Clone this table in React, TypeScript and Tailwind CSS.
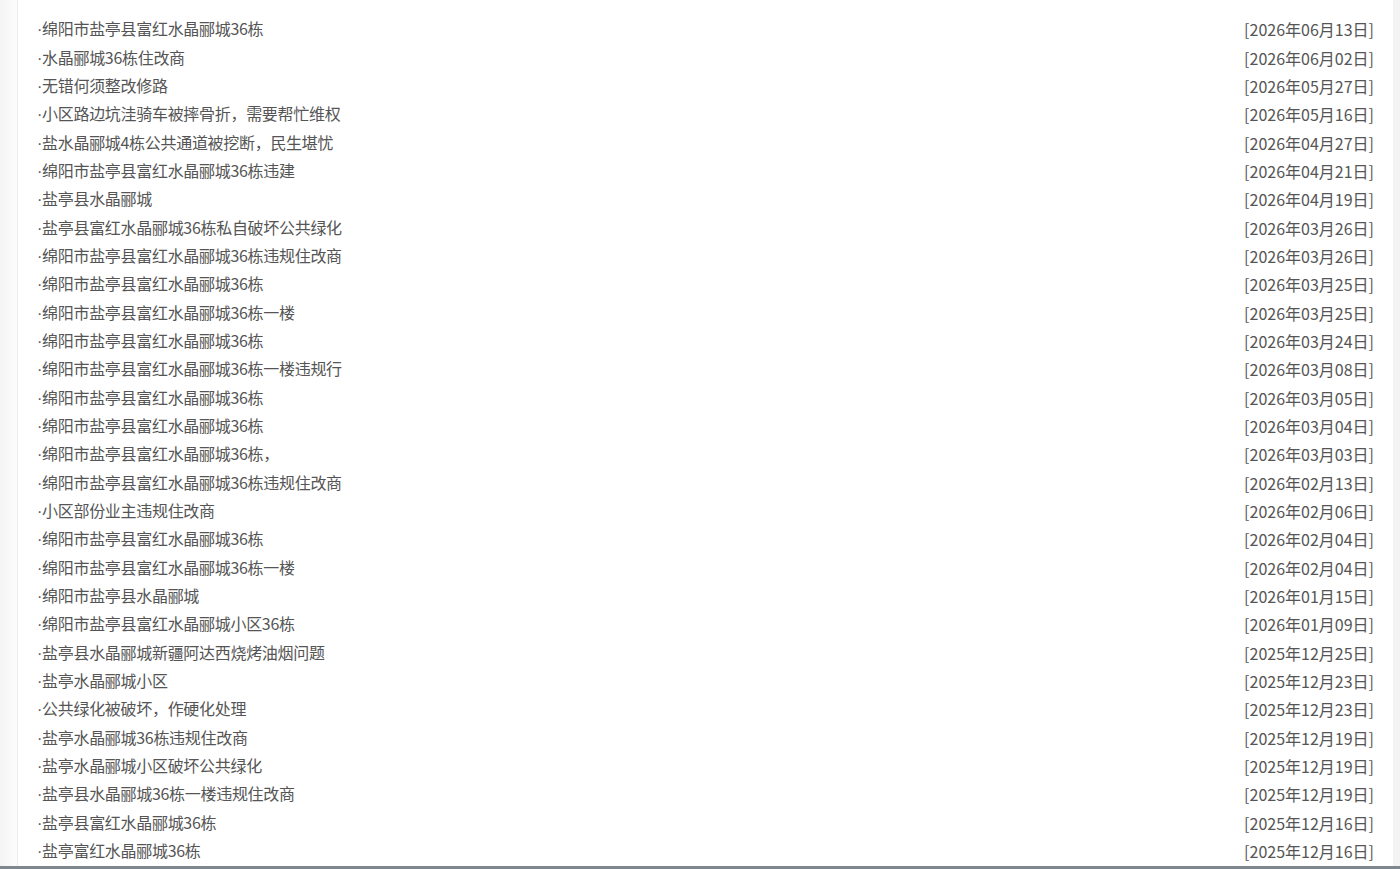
const items: [string, string][] = [
  ['绵阳市盐亭县富红水晶郦城36栋', '2026年06月13日'],
  ['水晶郦城36栋住改商', '2026年06月02日'],
  ['无错何须整改修路', '2026年05月27日'],
  ['小区路边坑洼骑车被摔骨折，需要帮忙维权', '2026年05月16日'],
  ['盐水晶郦城4栋公共通道被挖断，民生堪忧', '2026年04月27日'],
  ['绵阳市盐亭县富红水晶郦城36栋违建', '2026年04月21日'],
  ['盐亭县水晶郦城', '2026年04月19日'],
  ['盐亭县富红水晶郦城36栋私自破坏公共绿化', '2026年03月26日'],
  ['绵阳市盐亭县富红水晶郦城36栋违规住改商', '2026年03月26日'],
  ['绵阳市盐亭县富红水晶郦城36栋', '2026年03月25日'],
  ['绵阳市盐亭县富红水晶郦城36栋一楼', '2026年03月25日'],
  ['绵阳市盐亭县富红水晶郦城36栋', '2026年03月24日'],
  ['绵阳市盐亭县富红水晶郦城36栋一楼违规行', '2026年03月08日'],
  ['绵阳市盐亭县富红水晶郦城36栋', '2026年03月05日'],
  ['绵阳市盐亭县富红水晶郦城36栋', '2026年03月04日'],
  ['绵阳市盐亭县富红水晶郦城36栋，', '2026年03月03日'],
  ['绵阳市盐亭县富红水晶郦城36栋违规住改商', '2026年02月13日'],
  ['小区部份业主违规住改商', '2026年02月06日'],
  ['绵阳市盐亭县富红水晶郦城36栋', '2026年02月04日'],
  ['绵阳市盐亭县富红水晶郦城36栋一楼', '2026年02月04日'],
  ['绵阳市盐亭县水晶郦城', '2026年01月15日'],
  ['绵阳市盐亭县富红水晶郦城小区36栋', '2026年01月09日'],
  ['盐亭县水晶郦城新疆阿达西烧烤油烟问题', '2025年12月25日'],
  ['盐亭水晶郦城小区', '2025年12月23日'],
  ['公共绿化被破坏，作硬化处理', '2025年12月23日'],
  ['盐亭水晶郦城36栋违规住改商', '2025年12月19日'],
  ['盐亭水晶郦城小区破坏公共绿化', '2025年12月19日'],
  ['盐亭县水晶郦城36栋一楼违规住改商', '2025年12月19日'],
  ['盐亭县富红水晶郦城36栋', '2025年12月16日'],
  ['盐亭富红水晶郦城36栋', '2025年12月16日'],
]

export default function App() {
  return (
    <div className="flex h-[869px] w-[1400px] flex-col overflow-hidden bg-white font-['Noto_Sans_CJK_SC','Noto_Sans',sans-serif] text-[16px] text-[#555]">
      <div className="flex min-h-0 flex-1">
        <div className="w-[17px] bg-gradient-to-r from-[#f4f4f4] to-[#fcfcfc]" />
        <div className="flex-1 border-l border-[#ececec] bg-white pt-[15px] pl-[19px] pr-[19px]">
          <ul>
            {items.map(([title, date], i) => (
              <li key={i} className="flex h-[28.35px] items-center justify-between leading-none">
                <span className="tracking-[-0.3px]">
                  <span className="font-['Liberation_Sans',sans-serif]">·</span>
                  {title}
                </span>
                <span>[{date}]</span>
              </li>
            ))}
          </ul>
        </div>
        <div className="w-[7px] bg-[#f3f3f3]" />
      </div>
      <div className="h-[3px] bg-[#7e868f]" />
    </div>
  )
}
